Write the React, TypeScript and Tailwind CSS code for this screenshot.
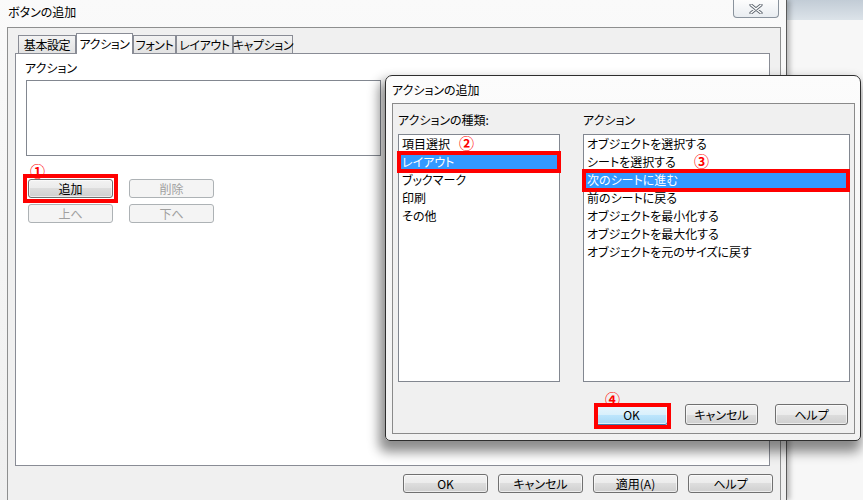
const jp = "font-['Noto_Sans_CJK_JP','Noto_Sans_CJK_SC',sans-serif] [font-feature-settings:'palt']"

type BtnProps = {
  label: string
  size: string
  disabled?: boolean
  primary?: boolean
}

function Btn({ label, size, disabled, primary }: BtnProps) {
  const look = disabled
    ? 'border-[#adb2b5] bg-[#f4f4f4] text-[#a0a0a0]'
    : primary
      ? 'border-[#3c7fb1] bg-[linear-gradient(#eaf6fd,#d9f0fc_50%,#bee6fd_50%,#a7d9f5)] text-black shadow-[inset_0_0_0_1px_rgba(255,255,255,0.6)]'
      : 'border-[#707070] bg-[linear-gradient(#f2f2f2,#ebebeb_50%,#dddddd_50%,#cfcfcf)] text-black shadow-[inset_0_0_0_1px_rgba(255,255,255,0.6)]'
  return (
    <div className={`flex items-center justify-center whitespace-nowrap rounded-[3px] border text-[12px] leading-none ${size} ${look}`}>
      {label}
    </div>
  )
}

function Mark({ n }: { n: string }) {
  return <span className="text-[15px] font-bold leading-[14px] text-[#ff0000]">{n}</span>
}

function Row({ text, selected }: { text: string; selected?: boolean }) {
  return (
    <div className={`h-[18px] whitespace-nowrap pl-[3px] text-[12px] leading-[18px] ${selected ? 'bg-[#3399ff] text-white' : 'text-black'}`}>
      {text}
    </div>
  )
}

function CloseButton() {
  return (
    <div className="absolute right-[7px] top-0 flex h-[18px] w-[46px] items-center justify-center rounded-b-[4px] border border-t-0 border-[#8a939d] bg-linear-to-b from-[#fdfdfd] to-[#e9edf1]">
      <svg width="14" height="10" viewBox="0 0 14 10">
        <path d="M2 1 L12 9 M12 1 L2 9" stroke="#5f6770" strokeWidth="3.2" strokeLinecap="round" fill="none" />
        <path d="M2 1 L12 9 M12 1 L2 9" stroke="#ffffff" strokeWidth="1.4" strokeLinecap="round" fill="none" />
      </svg>
    </div>
  )
}

export default function App() {
  const tabs = [
    { label: '基本設定', w: 'w-[58px]' },
    { label: 'アクション', w: 'w-[57px]', active: true },
    { label: 'フォント', w: 'w-[43px]' },
    { label: 'レイアウト', w: 'w-[57px]' },
    { label: 'キャプション', w: 'w-[60px]' },
  ]

  return (
    <div className={`relative flex h-[500px] w-[863px] overflow-hidden bg-[#f7f7f7] ${jp}`}>
      {/* main window: ボタンの追加 */}
      <div className="relative z-10 flex h-full w-[787px] flex-col border-r border-[#5a5a5a] bg-linear-to-b from-[#fafafa] to-[#efefef] shadow-[3px_0_5px_rgba(0,0,0,0.25)]">
        <div className="relative h-[27px] pl-[8px] pt-[5px] text-[12px] leading-[14px] text-black">
          ボタンの追加
          <CloseButton />
        </div>

        <div className="ml-[7px] mr-[5px] flex-1 border-l border-r border-t border-[#8e8f8f] bg-[#f0f0f0] pl-[7px] pt-[5px]">
          {/* tabs */}
          <div className="flex h-[20px] items-end pl-[3px]">
            {tabs.map((t) =>
              t.active ? (
                <div
                  key={t.label}
                  className={`relative z-10 -mb-px flex h-[21px] items-center justify-center whitespace-nowrap border border-b-0 border-[#898c95] bg-white text-[12px] tracking-[-0.4px] ${t.w}`}
                >
                  {t.label}
                </div>
              ) : (
                <div
                  key={t.label}
                  className={`flex h-[18px] items-center justify-center whitespace-nowrap border border-b-0 border-[#898c95] bg-linear-to-b from-[#f3f3f3] to-[#e2e2e2] text-[12px] tracking-[-0.4px] ${t.w}`}
                >
                  {t.label}
                </div>
              ),
            )}
          </div>

          {/* tab page */}
          <div className="h-[413px] w-[755px] border border-[#898c95] bg-white pt-[7px]">
            <div className="h-[14px] pl-[9px] text-[12px] leading-[14px]">アクション</div>
            <div className="ml-[10px] mt-[5px] h-[76px] w-[355px] border border-[#828790] bg-white" />
            <div className="h-[23px] pl-[14px] pt-[2px]">
              <Mark n="①" />
            </div>
            <div className="ml-[12px] grid grid-cols-[85px_85px] gap-x-[16px] gap-y-[6px]">
              <div className="outline-4 outline-offset-1 outline-solid outline-[#ff0000]">
                <Btn label="追加" size="h-[19px] w-[85px]" />
              </div>
              <Btn label="削除" size="h-[19px] w-[85px]" disabled />
              <Btn label="上へ" size="h-[19px] w-[85px]" disabled />
              <Btn label="下へ" size="h-[19px] w-[85px]" disabled />
            </div>
          </div>

          <div className="mt-[8px] flex justify-end gap-[10px] pr-[7px]">
            <Btn label="OK" size="h-[19px] w-[85px]" />
            <Btn label="キャンセル" size="h-[19px] w-[85px]" />
            <Btn label="適用(A)" size="h-[19px] w-[85px]" />
            <Btn label="ヘルプ" size="h-[19px] w-[85px]" />
          </div>
        </div>
      </div>

      {/* desktop strip on the right */}
      <div className="flex flex-1 flex-col">
        <div className="h-[20px] bg-linear-to-b from-[#c2ccd6] to-[#dce3e9]" />
        <div className="flex-1 bg-[#f7f7f7]" />
      </div>

      {/* dialog: アクションの追加 */}
      <div className="absolute left-[385px] top-[75px] z-20 flex h-[366px] w-[476px] flex-col rounded-b-[5px] rounded-t-[7px] border border-[#2e2e2e] bg-linear-to-b from-[#fcfcfc] to-[#f2f2f2] shadow-[-3px_8px_12px_3px_rgba(0,0,0,0.45)]">
        <div className="flex h-[27px] items-center pl-[6px] text-[12px] text-black">アクションの追加</div>
        <div className="ml-[6px] h-[331px] w-[463px] border border-[#8a8a8a] bg-[#f0f0f0] pl-[5px] pt-[9px]">
          <div className="flex gap-[23px]">
            <div className="w-[162px]">
              <div className="h-[14px] text-[12px] leading-[14px]">アクションの種類:</div>
              <div className="mt-[7px] h-[248px] border border-[#828790] bg-white">
                <div className="flex h-[18px] items-center whitespace-nowrap pl-[3px] text-[12px]">
                  項目選択
                  <span className="ml-[9px]">
                    <Mark n="②" />
                  </span>
                </div>
                <div className="relative">
                  <Row text="レイアウト" selected />
                  <span className="absolute -bottom-[2px] -left-[2px] -right-[2px] -top-[2px] border-4 border-[#ff0000]" />
                </div>
                <Row text="ブックマーク" />
                <Row text="印刷" />
                <Row text="その他" />
              </div>
            </div>
            <div className="w-[267px]">
              <div className="h-[14px] text-[12px] leading-[14px]">アクション</div>
              <div className="mt-[7px] h-[248px] border border-[#828790] bg-white">
                <Row text="オブジェクトを選択する" />
                <div className="flex h-[18px] items-center whitespace-nowrap pl-[3px] text-[12px]">
                  シートを選択する
                  <span className="ml-[18px]">
                    <Mark n="③" />
                  </span>
                </div>
                <div className="relative">
                  <Row text="次のシートに進む" selected />
                  <span className="absolute -bottom-[3px] -left-[2px] -right-[1px] -top-[2px] border-4 border-[#ff0000]" />
                </div>
                <Row text="前のシートに戻る" />
                <Row text="オブジェクトを最小化する" />
                <Row text="オブジェクトを最大化する" />
                <Row text="オブジェクトを元のサイズに戻す" />
              </div>
            </div>
          </div>

          <div className="mt-[22px] flex justify-end gap-[17px] pr-[6px]">
            <div className="relative">
              <Btn label="OK" size="h-[21px] w-[73px]" primary />
              <span className="absolute -bottom-[4px] -left-[1px] -right-[3px] -top-[1px] border-4 border-[#ff0000]" />
              <span className="absolute -top-[18px] left-[10px]">
                <Mark n="④" />
              </span>
            </div>
            <Btn label="キャンセル" size="h-[21px] w-[73px]" />
            <Btn label="ヘルプ" size="h-[21px] w-[73px]" />
          </div>
        </div>
      </div>
    </div>
  )
}
